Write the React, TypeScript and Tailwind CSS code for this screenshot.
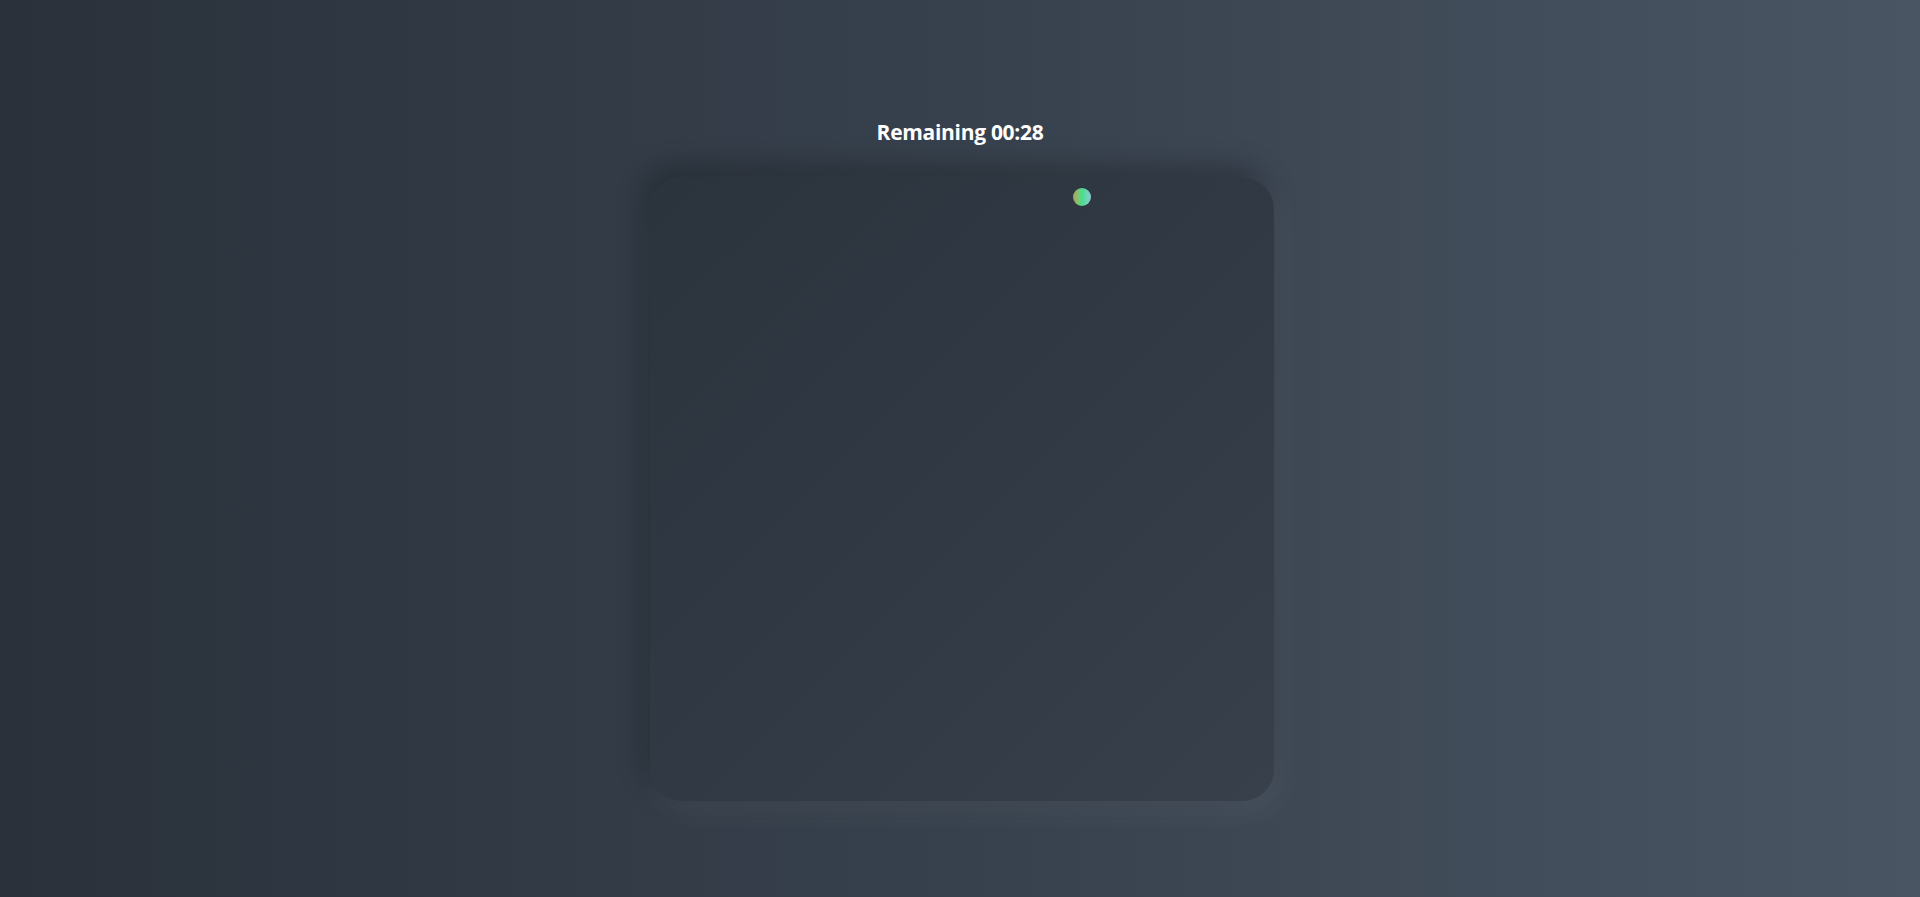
export default function App() {
  return (
    <div className="min-h-screen w-full bg-gradient-to-r from-[#2a313b] via-[#37414d] to-[#4a5564] flex flex-col items-center pt-[118px] font-['Open_Sans',sans-serif]">
      <h1 className="text-[21px] leading-7 font-bold text-white tracking-[-0.3px]">Remaining 00:28</h1>
      <div className="relative mt-[31px] ml-[3px] w-[624px] h-[624px] rounded-[32px] bg-gradient-to-br from-[#2b333d] to-[#37404b] shadow-[-6px_-10px_28px_rgba(0,0,0,0.28),6px_10px_28px_rgba(255,255,255,0.07)]">
        <div className="absolute left-[423px] top-[11px] w-[18px] h-[18px] rounded-full bg-gradient-to-r from-[#a8a055] via-[#3ee08a] to-[#8cc6d6]" />
      </div>
    </div>
  );
}
